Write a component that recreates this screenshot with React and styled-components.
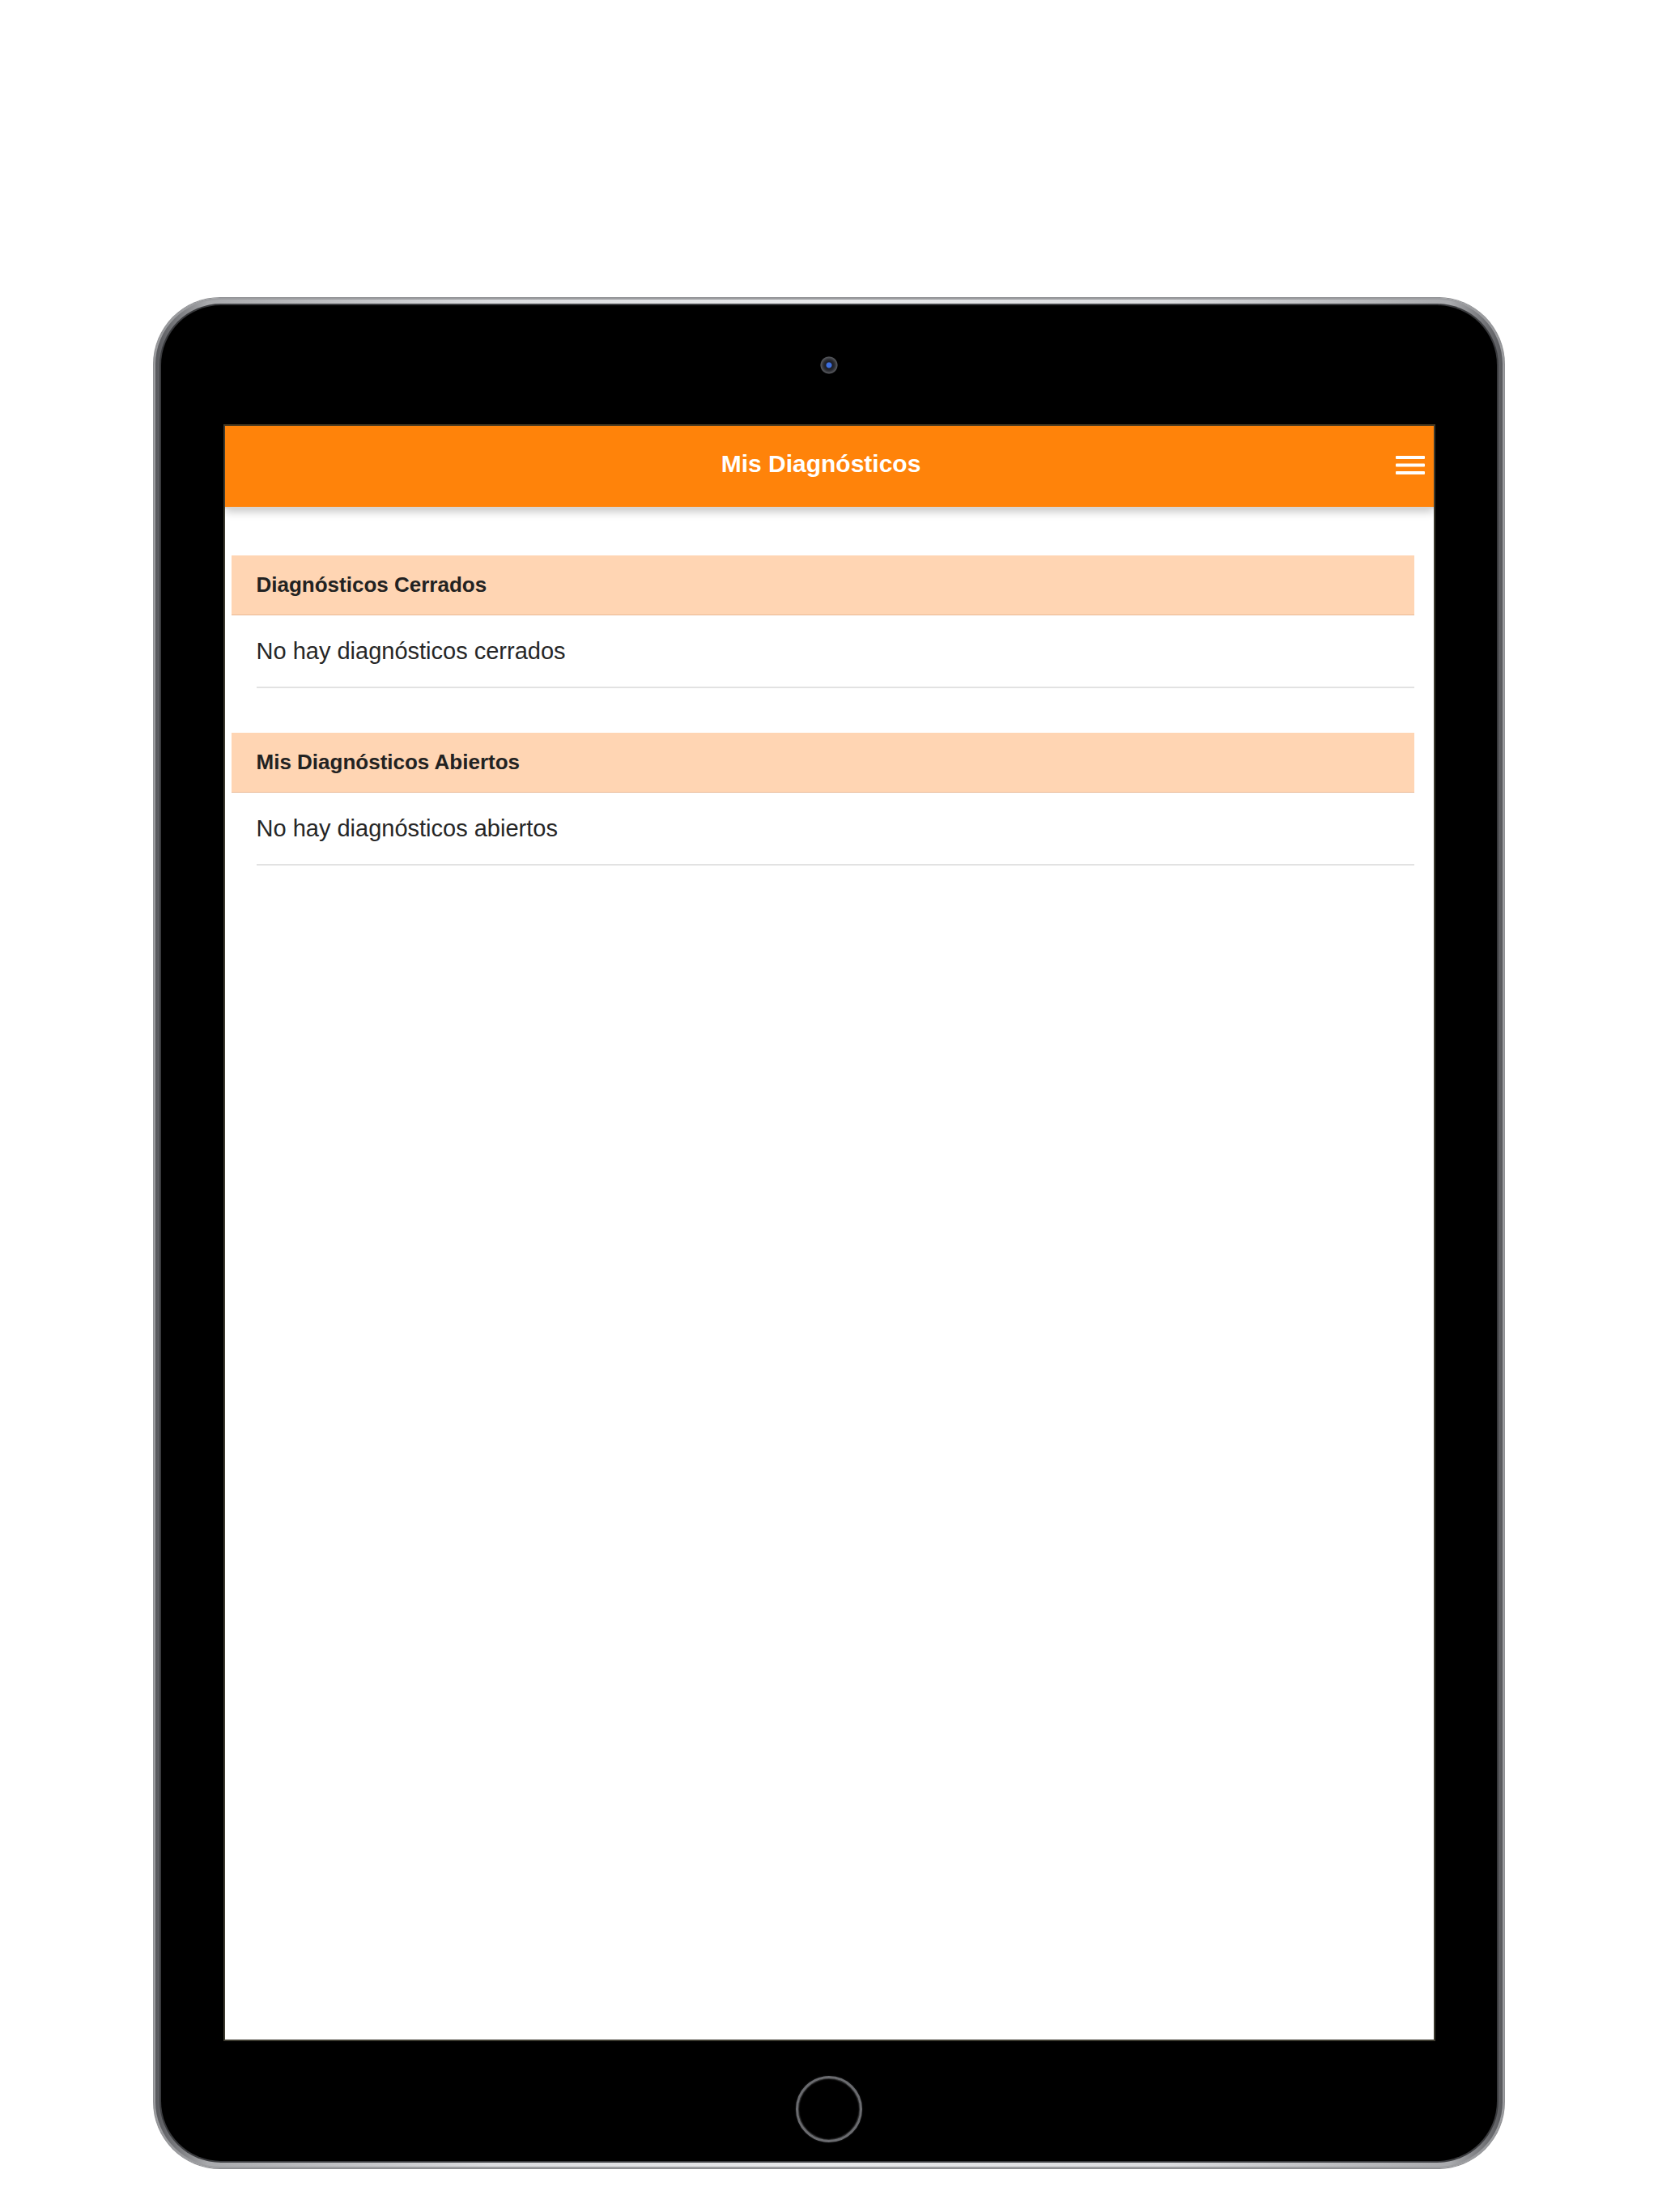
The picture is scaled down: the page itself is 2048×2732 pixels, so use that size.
import React from "react";
import styled, { createGlobalStyle } from "styled-components";

const GlobalStyle = createGlobalStyle`
  html, body {
    margin: 0;
    padding: 0;
    background: #ffffff;
    font-family: "Liberation Sans", Arial, sans-serif;
  }
`;

const sections = [
  { title: "Diagnósticos Cerrados", empty: "No hay diagnósticos cerrados" },
  { title: "Mis Diagnósticos Abiertos", empty: "No hay diagnósticos abiertos" }
];

function MenuIcon() {
  return (
    <svg width="36" height="24" viewBox="0 0 36 24">
      <rect x="0" y="0" width="36" height="4" rx="1" fill="#fff" />
      <rect x="0" y="9.5" width="36" height="4" rx="1" fill="#fff" />
      <rect x="0" y="19" width="36" height="4" rx="1" fill="#fff" />
    </svg>
  );
}

function Section({ title, empty }) {
  return (
    <SectionBlock>
      <SectionHeader>{title}</SectionHeader>
      <EmptyRow>{empty}</EmptyRow>
    </SectionBlock>
  );
}

export default function App() {
  return (
    <>
      <GlobalStyle />
      <Page>
        <DeviceFrame>
          <Bezel>
            <Camera />
            <Screen>
              <AppBar>
                <AppTitle>Mis Diagnósticos</AppTitle>
                <MenuButton>
                  <MenuIcon />
                </MenuButton>
              </AppBar>
              <Content>
                {sections.map(section => (
                  <Section key={section.title} {...section} />
                ))}
              </Content>
            </Screen>
            <HomeButton />
          </Bezel>
        </DeviceFrame>
      </Page>
    </>
  );
}

const Page = styled.div`
  width: 2048px;
  height: 2732px;
  display: flex;
  justify-content: center;
  padding-top: 368px;
  box-sizing: border-box;
  background: #fff;
`;

const DeviceFrame = styled.div`
  width: 1668px;
  height: 2310px;
  box-sizing: border-box;
  padding: 9px;
  border-radius: 82px;
  background: linear-gradient(
    90deg,
    #55565a 0%,
    #a9aaad 4%,
    #dcdde0 25%,
    #e8e9eb 50%,
    #dcdde0 75%,
    #a9aaad 96%,
    #55565a 100%
  );
  box-shadow: 0 0 0 1px #8d8e91, inset 0 0 0 2px #9c9da0;
`;

const Bezel = styled.div`
  height: 100%;
  background: #000;
  border-radius: 74px;
  box-shadow: 0 0 0 2px #3a3b3e;
  display: flex;
  flex-direction: column;
  align-items: center;
  padding-top: 63px;
  box-sizing: border-box;
`;

const Camera = styled.div`
  width: 22px;
  height: 22px;
  border-radius: 50%;
  background: radial-gradient(circle, #3d6fe0 0 3px, #1a1c24 4px, #2c2d33 7px, #55575c 10px, #0b0b0d 11px);
  margin-bottom: 62px;
`;

const Screen = styled.div`
  width: 1497px;
  height: 1997px;
  background: #fff;
  border: 2px solid #3c3a2f;
  border-top-color: #4a3a20;
  box-sizing: border-box;
  display: flex;
  flex-direction: column;
  overflow: hidden;
`;

const AppBar = styled.div`
  height: 102px;
  flex-shrink: 0;
  box-sizing: border-box;
  padding-bottom: 6px;
  background: #ff830a;
  display: flex;
  align-items: center;
  justify-content: center;
  position: relative;
  border-bottom: 2px solid #d9d5d2;
  box-shadow: 0 4px 10px rgba(0, 0, 0, 0.22);
  z-index: 1;
`;

const AppTitle = styled.h1`
  margin: 0 20px 0 0;
  font-size: 30px;
  font-weight: 700;
  color: #fff;
`;

const MenuButton = styled.div`
  position: absolute;
  right: 11px;
  top: 37px;
  display: flex;
`;

const Content = styled.div`
  padding: 58px 24px 0 8px;
  display: flex;
  flex-direction: column;
  gap: 55px;
`;

const SectionBlock = styled.div`
  display: flex;
  flex-direction: column;
`;

const SectionHeader = styled.div`
  height: 73px;
  display: flex;
  align-items: center;
  padding-left: 31px;
  background: #ffd5b3;
  border-bottom: 1px solid #e9b995;
  font-size: 26px;
  font-weight: 700;
  color: #222;
`;

const EmptyRow = styled.div`
  margin-left: 31px;
  height: 88px;
  display: flex;
  align-items: center;
  border-bottom: 2px solid #e2e2e2;
  font-size: 29px;
  color: #262626;
`;

const HomeButton = styled.div`
  width: 76px;
  height: 76px;
  margin-top: 43px;
  border-radius: 50%;
  border: 3px solid #6a6b6f;
  box-shadow: inset 0 0 2px #9a9b9e, 0 0 2px #2a2b2e;
`;
